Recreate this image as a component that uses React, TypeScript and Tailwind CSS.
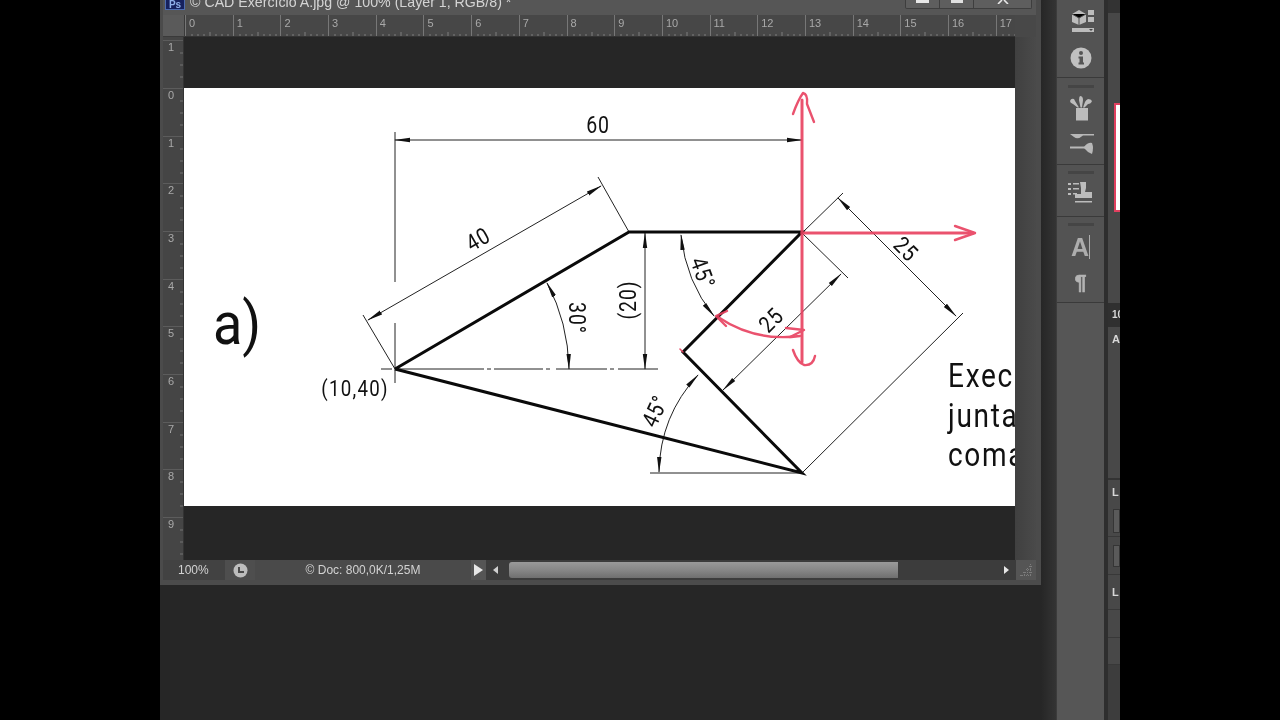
const hUnits = ['0', '1', '2', '3', '4', '5', '6', '7', '8', '9', '10', '11', '12', '13', '14', '15', '16', '17'];
const vUnits = ['1', '0', '1', '2', '3', '4', '5', '6', '7', '8', '9'];

function HTicks() {
  return (
    <svg width="47" height="5" className="absolute bottom-0 left-0 text-[#7e7e7e]">
      <path d="M6 3V5M12 3V5M18 3V5M24 1V5M30 3V5M36 3V5M42 3V5" stroke="currentColor" />
    </svg>
  );
}

function VTicks() {
  return (
    <svg width="6" height="47" className="absolute top-0 right-0 text-[#727272]">
      <path d="M3 12H6M3 24H6M3 36H6" stroke="currentColor" />
    </svg>
  );
}

function TitleBar() {
  return (
    <div className="flex h-[15px] shrink-0 overflow-hidden bg-[#565656] pl-[2px] pr-[4px]">
      <div className="flex h-[10px] w-[20px] items-end justify-center border-x border-b border-[#4d6cb0] bg-[#16215e] text-[10px] leading-[9px] font-bold text-[#8fb0ea]">
        Ps
      </div>
      <div className="ml-[5px] -mt-[6px] text-[14.2px] leading-[16px] whitespace-nowrap text-[#d4d4d4]">
        © CAD Exercício A.jpg @ 100% (Layer 1, RGB/8) *
      </div>
      <div className="ml-auto flex h-[9px] w-[127px] rounded-b-[2px] border border-t-0 border-[#3e3e3e] bg-[#5e5e5e]">
        <div className="flex w-[34px] justify-center border-r border-[#3e3e3e]">
          <div className="h-[3px] w-[13px] bg-[#e8e8e8]" />
        </div>
        <div className="flex w-[34px] justify-center border-r border-[#3e3e3e]">
          <div className="h-[3px] w-[12px] bg-[#e0e0e0]" />
        </div>
        <div className="flex flex-1 justify-center">
          <svg width="12" height="4" className="text-[#e8e8e8]">
            <path d="M5 0L1 4M7 0L11 4" stroke="currentColor" strokeWidth="1.6" />
          </svg>
        </div>
      </div>
    </div>
  );
}

function RulerRow() {
  return (
    <div className="flex h-[22px] shrink-0">
      <div className="w-[22px] shrink-0 border-r border-b border-[#3a3a3a] bg-[#5a5a5a]" />
      <div className="flex w-[830px] shrink-0 overflow-hidden border-b border-[#333] bg-[#474747]">
        {hUnits.map((n) => (
          <div key={n} className="relative h-full w-[47.7px] shrink-0 border-l border-[#777] pl-[3px] text-[11px] leading-[16px] text-[#a9a9a9]">
            {n}
            <HTicks />
          </div>
        ))}
      </div>
      <div className="flex-1 bg-[#484848]" />
    </div>
  );
}

// narrow technical lettering, squeezed horizontally like the drawing's
function Label({ x, y, r = 0, size = 23, spacing = 1, children }: { x: number; y: number; r?: number; size?: number; spacing?: number; children: string }) {
  return (
    <text
      transform={`translate(${x} ${y}) rotate(${r}) scale(0.85 1)`}
      fontSize={size}
      letterSpacing={spacing}
      textAnchor="middle"
      dominantBaseline="central"
    >
      {children}
    </text>
  );
}

function Drawing() {
  return (
    <svg viewBox="184 88 831 418" className="h-[418px] w-[831px] bg-white font-['Roboto',sans-serif]">
      <defs>
        <marker id="ah" markerWidth="16" markerHeight="8" refX="15" refY="3" orient="auto-start-reverse" markerUnits="userSpaceOnUse">
          <path d="M0 0.8L16 3L0 5.2Z" fill="#111" />
        </marker>
      </defs>
      <g stroke="#222" strokeWidth="1" fill="none">
        <path d="M395 132V282M395 323V383" />
        <path d="M363 315L395 369M598 177L629 232" />
        <path d="M650 473H802M802 233L843 193M802 473L963 313M802 233L848 278" />
        <path d="M381 369H392M398 369H484M487 369H491M494 369H543M546 369H550M556 369H607M610 369H614M618 369H658" />
        <path d="M395 140H802" markerStart="url(#ah)" markerEnd="url(#ah)" />
        <path d="M368 320L601 186" markerStart="url(#ah)" markerEnd="url(#ah)" />
        <path d="M645 233V369" markerStart="url(#ah)" markerEnd="url(#ah)" />
        <path d="M838 198L956 316" markerStart="url(#ah)" markerEnd="url(#ah)" />
        <path d="M841 274L723 390" markerStart="url(#ah)" markerEnd="url(#ah)" />
        <path d="M547 283Q568 322 569 369" markerStart="url(#ah)" markerEnd="url(#ah)" />
        <path d="M681 235Q686 282 714 316" markerStart="url(#ah)" markerEnd="url(#ah)" />
        <path d="M659 472Q660 416 698 375" markerStart="url(#ah)" markerEnd="url(#ah)" />
      </g>
      <path d="M395 369L629 232H802L683 352L802 473L395 369" stroke="#0a0a0a" strokeWidth="3" fill="none" />
      <g stroke="#e8405f" strokeWidth="2.4" fill="none" strokeLinecap="round" strokeLinejoin="round" opacity="0.9">
        <path d="M802 100V362" strokeWidth="3" />
        <path d="M793 114Q798 100 803 93Q808 94 807 104L814 122" />
        <path d="M793 350Q797 362 804 365Q813 366 815 356" />
        <path d="M802 233H973" strokeWidth="3" />
        <path d="M955 226L975 233L955 240" />
        <path d="M718 317Q755 342 800 336" />
        <path d="M727 311L716 316L726 326" />
        <path d="M786 328L804 330L790 337" />
        <path d="M680 349L683 352" strokeWidth="1.5" />
      </g>
      <g fill="#111">
        <Label x={598} y={125}>60</Label>
        <Label x={478} y={239} r={-30}>40</Label>
        <Label x={577} y={318} r={90}>30°</Label>
        <Label x={628} y={300} r={-90}>(20)</Label>
        <Label x={703} y={273} r={70}>45°</Label>
        <Label x={771} y={320} r={-45}>25</Label>
        <Label x={906} y={249} r={45}>25</Label>
        <Label x={655} y={411} r={-65}>45°</Label>
        <Label x={355} y={388} size={22} spacing={1.5}>(10,40)</Label>
      </g>
      <text transform="translate(213 344) scale(0.9 1)" fontSize="60" fontWeight="400" fill="#111">a)</text>
      <g fill="#111" fontSize="33">
        <text transform="translate(948 387) scale(0.85 1)" letterSpacing="2">Exec</text>
        <text transform="translate(948 427) scale(0.85 1)" letterSpacing="2">junta</text>
        <text transform="translate(948 466) scale(0.85 1)" letterSpacing="2">coma</text>
      </g>
    </svg>
  );
}

function StatusBar() {
  return (
    <div className="flex h-[20px] shrink-0 items-center bg-[#424242] text-[12px] text-[#d2d2d2]">
      <div className="w-[62px] pl-[15px]">100%</div>
      <div className="flex h-full w-[30px] items-center justify-center bg-[#4e4e4e]">
        <svg width="15" height="15" viewBox="0 0 15 15">
          <circle cx="7.5" cy="7.5" r="7" fill="#bdbdbd" />
          <path d="M5 4V10H11V8H7V4Z" fill="#4a4a4a" />
        </svg>
      </div>
      <div className="flex h-full w-[216px] items-center justify-center bg-[#4a4a4a]">© Doc: 800,0K/1,25M</div>
      <div className="flex h-full w-[15px] items-center justify-center bg-[#555]">
        <svg width="9" height="12" className="text-[#e8e8e8]">
          <path d="M0 0L9 6L0 12Z" fill="currentColor" />
        </svg>
      </div>
      <div className="flex h-full w-[530px] items-center bg-[#3c3c3c]">
        <svg width="5" height="8" className="ml-[7px] text-[#d0d0d0]">
          <path d="M5 0V8L0 4Z" fill="currentColor" />
        </svg>
        <div className="ml-[11px] h-[16px] w-[389px] rounded-l-[3px] bg-gradient-to-b from-[#9a9a9a] via-[#878787] to-[#6f6f6f]" />
        <svg width="5" height="8" className="ml-auto mr-[7px] text-[#e6e6e6]">
          <path d="M0 0V8L5 4Z" fill="currentColor" />
        </svg>
      </div>
      <div className="flex h-full flex-1 items-center justify-center bg-[#555]">
        <svg width="14" height="14" className="text-[#7c7c7c]">
          <path d="M11.5 1V13M8.5 5V13M5.5 9V13M2.5 12V13M1 12.5H13M4 9.5H13M7 6.5H13M10 3.5H13" stroke="currentColor" strokeDasharray="1 1" />
        </svg>
      </div>
    </div>
  );
}

function CubeIcon() {
  return (
    <svg width="24" height="24" viewBox="0 0 24 24" className="text-[#bcbcbc]">
      <path d="M1 5L8 1L15 5V13L8 16L1 13Z" fill="currentColor" />
      <path d="M1 5L8 9L15 5M8 9V16" stroke="#4a4a4a" />
      <path d="M17 1H23V6H17ZM17 8H23V13H17Z" fill="currentColor" />
      <path d="M1 19H23V23H1Z" fill="currentColor" />
      <path d="M18 20H22L20 22Z" fill="#444" />
    </svg>
  );
}

function InfoIcon() {
  return (
    <svg width="22" height="22" viewBox="0 0 22 22" className="text-[#c0c0c0]">
      <circle cx="11" cy="11" r="10.5" fill="currentColor" />
      <circle cx="11" cy="6" r="2" fill="#555" />
      <path d="M8.5 9.5H13V15.5H14V17.5H8.5V15.5H9.5V11.5H8.5Z" fill="#555" />
    </svg>
  );
}

function BrushesIcon() {
  return (
    <svg width="24" height="25" viewBox="0 0 24 25" className="text-[#bcbcbc]">
      <path d="M7 12H19V24.5H7Z" fill="currentColor" />
      <path d="M1 5Q2 2 5 3L6 5L10 11.5H8.5L4 8Q1 7 1 5Z" fill="currentColor" />
      <path d="M11 0Q14 0 14 4L13 11.5H11.5L10 4Q10 1 11 0Z" fill="currentColor" />
      <path d="M19 3Q22 3 23 5Q22 8 19 8L15.5 11.5H14L16 6Q17 4 19 3Z" fill="currentColor" />
    </svg>
  );
}

function SlidersIcon() {
  return (
    <svg width="26" height="22" viewBox="0 0 26 22" className="text-[#b8b8b8]">
      <path d="M1 1H25V2.5H14Q9 7 5 4Z" fill="currentColor" />
      <path d="M1 13.5H16V15.5H1Z" fill="currentColor" />
      <path d="M15 14Q19 9 23 10Q25 15 23 21Q18 19 15 15Z" fill="currentColor" />
    </svg>
  );
}

function StampIcon() {
  return (
    <svg width="25" height="22" viewBox="0 0 25 22" className="text-[#bcbcbc]">
      <path d="M0 2H3V4H0ZM5 2H11V3.5H5ZM0 7H3V9H0ZM5 7H11V8.5H5ZM0 12H3V14H0ZM5 12H9V13.5H5Z" fill="currentColor" />
      <path d="M12 1H18V7L17 11H24V17H7V13H13V7Z" fill="currentColor" />
      <path d="M7 20H24V21.5H7Z" fill="currentColor" />
    </svg>
  );
}

function DockTitle() {
  return <div className="mx-auto h-[3px] w-[26px] bg-[#454545] blur-[0.6px]" />;
}

function Dock() {
  return (
    <div className="flex w-[48px] shrink-0 flex-col border-l border-[#3c3c3c] bg-[#535353]">
      <div className="flex h-[78px] shrink-0 flex-col items-center gap-[14px] border-b border-[#3a3a3a] pt-[9px]">
        <div className="ml-[4px]"><CubeIcon /></div>
        <InfoIcon />
      </div>
      <div className="flex h-[87px] shrink-0 flex-col items-center border-b border-[#3a3a3a] pt-[7px]">
        <DockTitle />
        <div className="mt-[8px]"><BrushesIcon /></div>
        <div className="mt-[12px] ml-[3px]"><SlidersIcon /></div>
      </div>
      <div className="flex h-[52px] shrink-0 flex-col items-center border-b border-[#3a3a3a] pt-[6px]">
        <DockTitle />
        <div className="mt-[7px]"><StampIcon /></div>
      </div>
      <div className="flex h-[86px] shrink-0 flex-col items-center border-b border-[#3a3a3a] pt-[6px]">
        <DockTitle />
        <div className="mt-[5px] flex items-center font-['Liberation_Sans',sans-serif] text-[25px] leading-[32px] font-bold text-[#adadad]">
          A<span className="h-[24px] w-px bg-[#adadad]" />
        </div>
        <div className="mt-[7px] font-['Liberation_Sans',sans-serif] text-[21px] leading-[24px] font-bold text-[#b4b4b4] [-webkit-text-stroke:0.7px_#b4b4b4]">¶</div>
      </div>
      <div className="flex-1 bg-[#565656]" />
    </div>
  );
}

function RightStrip() {
  return (
    <div className="flex w-[12px] shrink-0 flex-col overflow-hidden bg-[#484848] font-['Liberation_Sans',sans-serif] text-[#d8d8d8]">
      <div className="h-[13px] shrink-0 bg-[#333]" />
      <div className="flex h-[290px] shrink-0 flex-col pt-[90px] pl-[6px]">
        <div className="h-[109px] w-[10px] shrink-0 border-2 border-[#e0405f] bg-white" />
      </div>
      <div className="h-[24px] shrink-0 bg-[#303030] pl-[4px] text-[10px] leading-[24px] font-bold whitespace-nowrap">10</div>
      <div className="h-[153px] shrink-0 border-b-2 border-[#333] pl-[4px] text-[11px] leading-[24px] font-bold whitespace-nowrap">A</div>
      <div className="h-[25px] shrink-0 pl-[4px] text-[11px] leading-[24px] font-bold">L</div>
      <div className="flex h-[32px] shrink-0 items-center border-b border-[#383838] pl-[5px]">
        <div className="h-[24px] w-[10px] border border-[#353535] bg-[#5a5a5a]" />
      </div>
      <div className="flex h-[38px] shrink-0 items-center border-b border-[#383838] pl-[5px]">
        <div className="h-[22px] w-[10px] border border-[#353535] bg-[#5a5a5a]" />
      </div>
      <div className="h-[35px] shrink-0 border-b border-[#383838] pl-[4px] text-[11px] leading-[34px] font-bold">L</div>
      <div className="h-[28px] shrink-0 border-b border-[#383838]" />
      <div className="h-[27px] shrink-0 border-b border-[#383838]" />
      <div className="flex-1 bg-[#3d3d3d]" />
    </div>
  );
}

export default function App() {
  return (
    <div className="flex h-screen w-[1280px] overflow-hidden bg-black font-['Liberation_Sans',sans-serif]">
      <div className="w-[160px] shrink-0" />
      <div className="flex w-[960px] shrink-0 bg-[#262626] blur-[0.4px]">
        <div className="flex h-[585px] w-[881px] shrink-0 flex-col border-r-[5px] border-b-[5px] border-l-[3px] border-[#4b4b4b]">
          <TitleBar />
          <RulerRow />
          <div className="flex min-h-0 flex-1">
            <div className="w-[21px] shrink-0 overflow-hidden border-r border-[#333] bg-[#454545] pt-[3.3px]">
              {vUnits.map((n, i) => (
                <div key={i} className="relative h-[47.7px] border-t border-[#5c5c5c] pl-[5px] text-[11px] leading-[13px] text-[#a9a9a9]">
                  {n}
                  <VTicks />
                </div>
              ))}
            </div>
            <div className="flex w-[831px] shrink-0 flex-col bg-[#262626] pt-[51px]">
              <Drawing />
            </div>
            <div className="flex-1 bg-gradient-to-r from-[#404040] to-[#4a4a4a]" />
          </div>
          <StatusBar />
        </div>
        <div className="w-[15px] shrink-0 bg-gradient-to-r from-[#262626] to-[#343434]" />
        <Dock />
        <div className="w-[4px] shrink-0 bg-[#2e2e2e]" />
        <RightStrip />
      </div>
      <div className="flex-1" />
    </div>
  );
}
